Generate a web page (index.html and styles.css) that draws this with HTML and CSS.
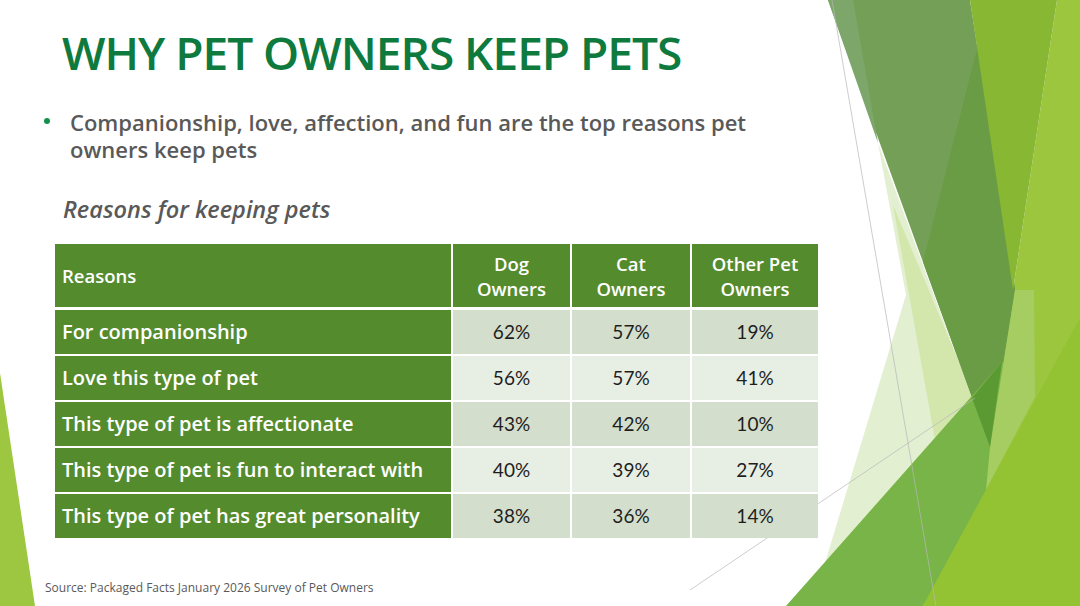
FILE: index.html
```html
<!DOCTYPE html>
<html lang="en">
<head>
<meta charset="utf-8">
<title>Why Pet Owners Keep Pets</title>
<link rel="stylesheet" href="styles.css">
</head>
<body>
<div class="slide">
  <svg class="decor" viewBox="0 0 1080 606" width="1080" height="606" aria-hidden="true">
    <polygon class="s-left" points="0,373 35,606 0,606"/>
    <polygon class="s-light" points="1013,290 1057,0 1080,0 1080,606 923,606"/>
    <polygon class="s-pale" points="878,143 990,447 923,606 812,606 906,295"/>
    <polygon class="s-pale2" points="893,205 975,400 935,440"/>
    <polygon class="s-dark" points="828,0 970,0 1015,290 990,447"/>
    <polygon class="s-stripe" points="828,0 853,0 878,143"/>
    <polygon class="s-dark2" points="978,45 1015,290 990,447 923,262"/>
    <polygon class="s-yellow" points="970,0 1057,0 1013,290"/>
    <polygon class="s-mid" points="786,606 1002,362 1034,397 986,490 923,606"/>
    <polygon class="s-lt" points="1015,290 1034,290 1035,397 986,490 990,447"/>
    <polygon class="s-tip" points="972,398 1002,362 990,447"/>
    <polygon class="s-bright" points="1080,318 1080,606 923,606 986,490"/>
    <line class="s-line" x1="832" y1="0" x2="936" y2="606"/>
    <line class="s-line" x1="690" y1="590" x2="975" y2="398"/>
  </svg>
  <div class="content">
    <h1 class="title">WHY PET OWNERS KEEP PETS</h1>
    <ul class="bullets">
      <li class="bullet"><span class="dot"></span><span class="bullet-text">Companionship, love, affection, and fun are the top reasons pet owners keep pets</span></li>
    </ul>
    <p class="caption">Reasons for keeping pets</p>
    <table class="data">
      <colgroup>
        <col class="c-reason">
        <col class="c-dog">
        <col class="c-cat">
        <col class="c-other">
      </colgroup>
      <thead>
        <tr>
          <th class="h-reason">Reasons</th>
          <th class="h-num">Dog<br>Owners</th>
          <th class="h-num">Cat<br>Owners</th>
          <th class="h-num h-last">Other Pet<br>Owners</th>
        </tr>
      </thead>
      <tbody>
        <tr class="r-odd r-first">
          <td class="reason">For companionship</td><td class="num">62%</td><td class="num">57%</td><td class="num n-last">19%</td>
        </tr>
        <tr class="r-even">
          <td class="reason">Love this type of pet</td><td class="num">56%</td><td class="num">57%</td><td class="num n-last">41%</td>
        </tr>
        <tr class="r-odd">
          <td class="reason">This type of pet is affectionate</td><td class="num">43%</td><td class="num">42%</td><td class="num n-last">10%</td>
        </tr>
        <tr class="r-even">
          <td class="reason">This type of pet is fun to interact with</td><td class="num">40%</td><td class="num">39%</td><td class="num n-last">27%</td>
        </tr>
        <tr class="r-odd">
          <td class="reason">This type of pet has great personality</td><td class="num">38%</td><td class="num">36%</td><td class="num n-last">14%</td>
        </tr>
      </tbody>
    </table>
    <p class="source">Source: Packaged Facts January 2026 Survey of Pet Owners</p>
  </div>
</div>
</body>
</html>
```
FILE: styles.css
```css
html, body {
  margin: 0;
  padding: 0;
}
body {
  width: 1080px;
  height: 606px;
  overflow: hidden;
  background: #ffffff;
  font-family: "Open Sans", "Noto Sans", sans-serif;
}
.slide {
  position: relative;
  width: 1080px;
  height: 606px;
  overflow: hidden;
}
.decor {
  position: absolute;
  left: 0;
  top: 0;
}
.s-left { fill: #9dc740; }
.s-light { fill: #9bc63e; }
.s-pale { fill: #e3efd1; }
.s-pale2 { fill: #d3e7ad; }
.s-dark { fill: #73a056; }
.s-stripe { fill: #7ca66a; }
.s-dark2 { fill: #6a9c45; }
.s-yellow { fill: #87b733; }
.s-mid { fill: #78b447; }
.s-lt { fill: #a6cd62; }
.s-tip { fill: #5b9a33; }
.s-bright { fill: #93c232; }
.s-line { stroke: #b9b9b9; stroke-width: 1; opacity: 0.7; }

.content {
  position: relative;
  display: flex;
  flex-direction: column;
  align-items: flex-start;
  padding-top: 24px;
}
.title {
  margin: 0 0 0 62px;
  font-size: 46px;
  line-height: 56px;
  font-weight: 600;
  color: #0f7a3e;
  letter-spacing: -1px;
}
.bullets {
  list-style: none;
  margin: 29px 0 0 0;
  padding: 0;
}
.bullet {
  display: flex;
  align-items: flex-start;
  font-size: 22px;
  line-height: 27px;
  font-weight: 600;
  color: #595959;
}
.dot {
  flex: none;
  width: 6px;
  height: 6px;
  border-radius: 50%;
  background: #13904a;
  margin: 9px 0 0 44px;
}
.bullet-text {
  margin-left: 20px;
  width: 705px;
}
.caption {
  margin: 32px 0 0 63px;
  font-size: 23.5px;
  line-height: 28px;
  font-style: italic;
  font-weight: 600;
  color: #595959;
}
.data {
  margin: 21px 0 0 55px;
  width: 763px;
  border-collapse: separate;
  border-spacing: 0;
  table-layout: fixed;
}
.c-reason { width: 398px; }
.c-dog { width: 119px; }
.c-cat { width: 120px; }
.c-other { width: 126px; }
.data th,
.data td {
  padding: 0;
  box-sizing: border-box;
}
.data th {
  height: 63px;
  background: #548b2d;
  color: #ffffff;
  font-size: 18.5px;
  line-height: 25px;
  font-weight: 600;
  border-right: 2px solid #ffffff;
}
.data .h-reason {
  text-align: left;
  padding-left: 7px;
}
.data .h-num {
  text-align: center;
}
.data .h-last { border-right: none; }
.data td {
  height: 46px;
  border-top: 2px solid #ffffff;
  border-right: 2px solid #ffffff;
  font-size: 20px;
  line-height: 22px;
}
.data .r-first td {
  height: 47px;
  border-top: 3px solid #ffffff;
}
.data .n-last { border-right: none; }
.data .reason {
  background: #548b2d;
  color: #ffffff;
  font-weight: 600;
  padding-left: 7px;
  text-align: left;
}
.data .num {
  text-align: center;
  font-family: "Lato", "Open Sans", sans-serif;
  font-size: 19px;
  color: #1e1e1e;
}
.r-odd .num { background: #d3dfcc; }
.r-even .num { background: #e7eee4; }
.source {
  margin: 43px 0 0 45px;
  font-size: 12px;
  line-height: 14px;
  color: #595959;
}
```
